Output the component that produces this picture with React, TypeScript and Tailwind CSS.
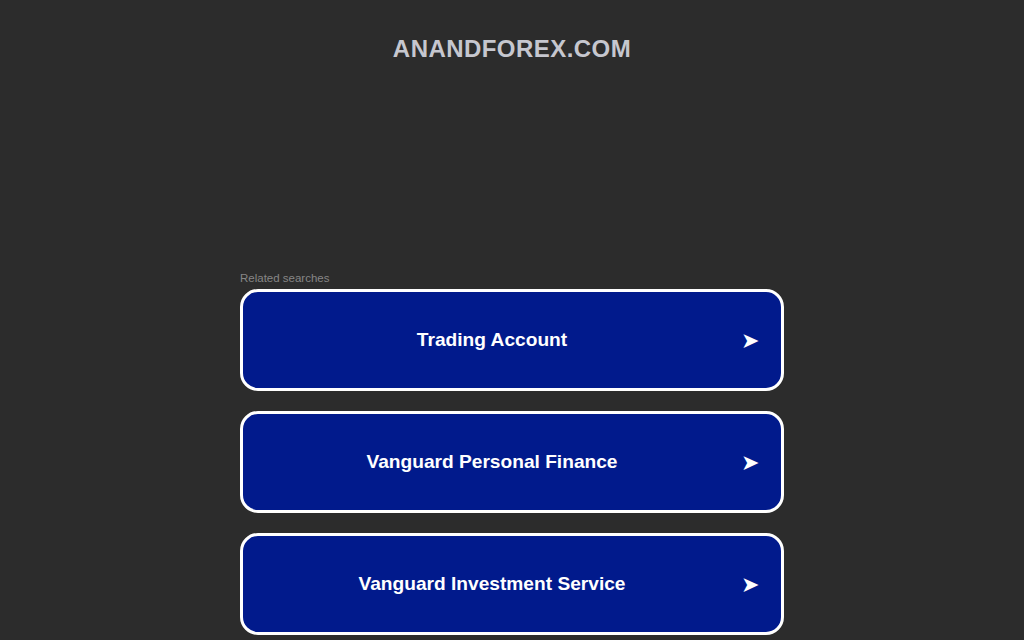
import React from 'react'

const searches = ['Trading Account', 'Vanguard Personal Finance', 'Vanguard Investment Service']

export default function App() {
  return (
    <div className="min-h-screen bg-[#2c2c2c] font-['Liberation_Sans',Arial,sans-serif]">
      <div className="flex flex-col items-center pt-[35px]">
        <h1 className="text-[24px] leading-[28px] font-bold text-[#c6c7cf] tracking-[0.45px]">
          ANANDFOREX.COM
        </h1>
      </div>

      <div className="mx-auto w-[544px] mt-[208px]">
        <p className="text-[11.5px] leading-[14px] text-[#868686] mb-1">Related searches</p>
        <div className="flex flex-col gap-[20px]">
          {searches.map((s) => (
            <a
              key={s}
              href="#"
              className="flex items-center h-[102px] rounded-[18px] border-[3px] border-white bg-[#011a8c] text-white"
            >
              <span className="flex-1 pt-[1px] text-center text-[19.15px] font-bold">{s}</span>
              <span className="w-[17px] mr-[23px] pt-[1px] text-[22px] leading-none">➤</span>
            </a>
          ))}
        </div>
      </div>
    </div>
  )
}
